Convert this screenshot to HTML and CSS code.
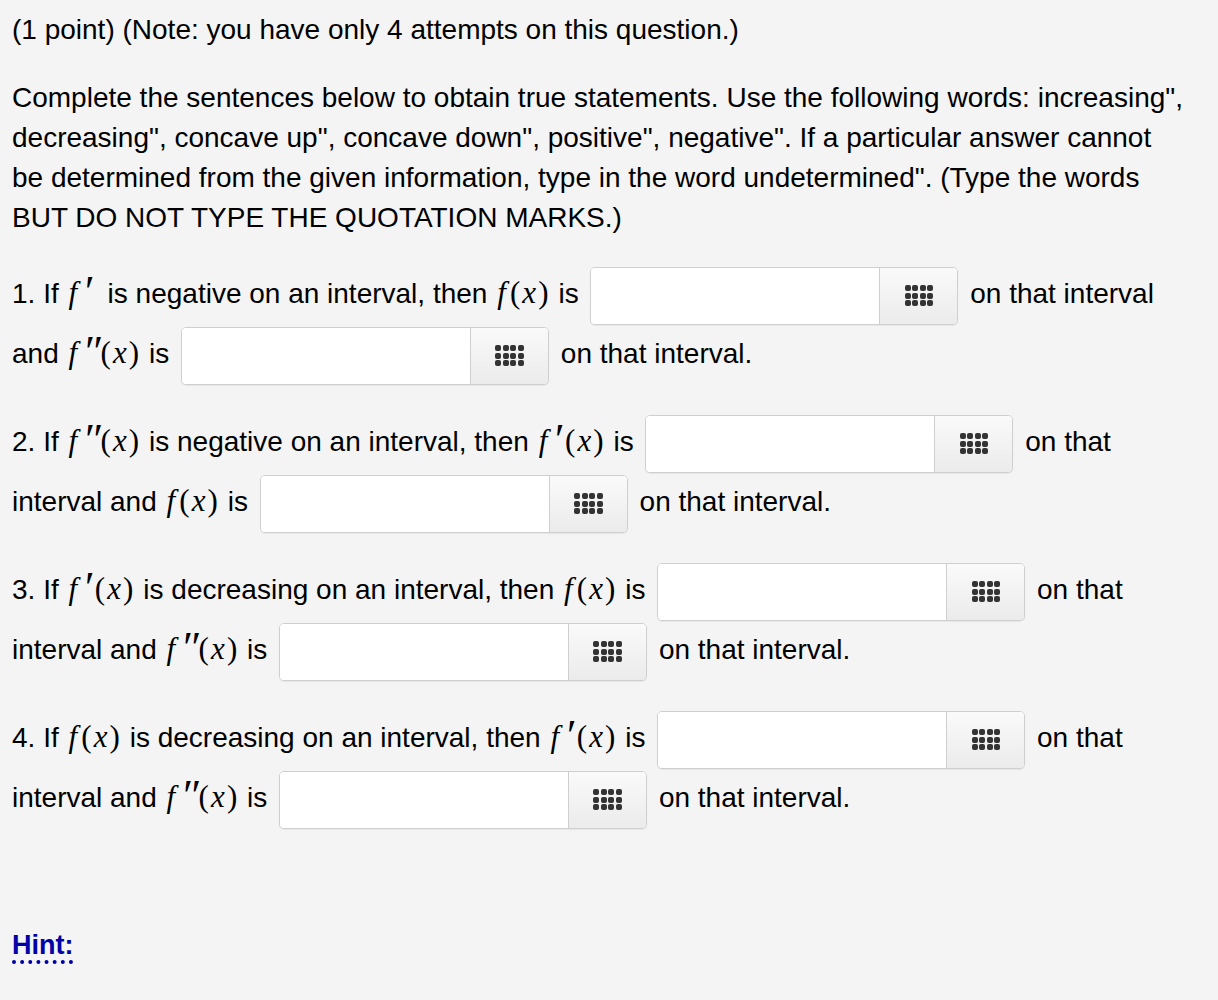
FILE: index.html
```html
<!DOCTYPE html>
<html>
<head>
<meta charset="utf-8">
<link rel="stylesheet" href="styles.css">
</head>
<body>
<div class="page">
<p class="note">(1 point) (Note: you have only 4 attempts on this question.)</p>
<p class="intro">Complete the sentences below to obtain true statements. Use the following words: increasing", decreasing", concave up", concave down", positive", negative". If a particular answer cannot be determined from the given information, type in the word undetermined". (Type the words BUT DO NOT TYPE THE QUOTATION MARKS.)</p>

<p class="item">1. If <span class="m solo"><i class="f">f</i><span class="pr">′</span></span> is negative on an interval, then <span class="m"><i class="f">f</i>(<i>x</i>)</span> is <span class="ans"><span class="field"></span><span class="btn"><span class="grid"><b></b><b></b><b></b><b></b><b></b><b></b><b></b><b></b><b></b><b></b><b></b><b></b></span></span></span> on that interval and <span class="m"><i class="f">f</i><span class="pr pr2">″</span>(<i>x</i>)</span> is <span class="ans"><span class="field"></span><span class="btn"><span class="grid"><b></b><b></b><b></b><b></b><b></b><b></b><b></b><b></b><b></b><b></b><b></b><b></b></span></span></span> on that interval.</p>

<p class="item">2. If <span class="m"><i class="f">f</i><span class="pr pr2">″</span>(<i>x</i>)</span> is negative on an interval, then <span class="m"><i class="f">f</i><span class="pr">′</span>(<i>x</i>)</span> is <span class="ans"><span class="field"></span><span class="btn"><span class="grid"><b></b><b></b><b></b><b></b><b></b><b></b><b></b><b></b><b></b><b></b><b></b><b></b></span></span></span> on that interval and <span class="m"><i class="f">f</i>(<i>x</i>)</span> is <span class="ans"><span class="field"></span><span class="btn"><span class="grid"><b></b><b></b><b></b><b></b><b></b><b></b><b></b><b></b><b></b><b></b><b></b><b></b></span></span></span> on that interval.</p>

<p class="item">3. If <span class="m"><i class="f">f</i><span class="pr">′</span>(<i>x</i>)</span> is decreasing on an interval, then <span class="m"><i class="f">f</i>(<i>x</i>)</span> is <span class="ans"><span class="field"></span><span class="btn"><span class="grid"><b></b><b></b><b></b><b></b><b></b><b></b><b></b><b></b><b></b><b></b><b></b><b></b></span></span></span> on that interval and <span class="m"><i class="f">f</i><span class="pr pr2">″</span>(<i>x</i>)</span> is <span class="ans"><span class="field"></span><span class="btn"><span class="grid"><b></b><b></b><b></b><b></b><b></b><b></b><b></b><b></b><b></b><b></b><b></b><b></b></span></span></span> on that interval.</p>

<p class="item">4. If <span class="m"><i class="f">f</i>(<i>x</i>)</span> is decreasing on an interval, then <span class="m"><i class="f">f</i><span class="pr">′</span>(<i>x</i>)</span> is <span class="ans"><span class="field"></span><span class="btn"><span class="grid"><b></b><b></b><b></b><b></b><b></b><b></b><b></b><b></b><b></b><b></b><b></b><b></b></span></span></span> on that interval and <span class="m"><i class="f">f</i><span class="pr pr2">″</span>(<i>x</i>)</span> is <span class="ans"><span class="field"></span><span class="btn"><span class="grid"><b></b><b></b><b></b><b></b><b></b><b></b><b></b><b></b><b></b><b></b><b></b><b></b></span></span></span> on that interval.</p>

<p class="hint"><a class="hintlink">Hint:</a></p>
</div>
</body>
</html>
```

FILE: styles.css
```css
html, body {
  margin: 0;
  padding: 0;
  background: #f4f4f4;
}
.page {
  padding: 10px 12px 0 12px;
  width: 1175px;
  font-family: "Liberation Sans", Arial, sans-serif;
  font-size: 28px;
  color: #000;
}
p {
  margin: 0;
  line-height: 40px;
}
.intro {
  margin-top: 28px;
}
.item {
  line-height: 60px;
  margin-top: 26px;
}
.item + .item {
  margin-top: 28px;
}
.m {
  font-family: "Liberation Serif", "Times New Roman", serif;
  font-size: 31px;
  line-height: 1;
  letter-spacing: 2.1px;
  white-space: nowrap;
  margin-left: 2px;
}
.m i {
  font-style: italic;
}
.m.solo {
  margin-right: 5px;
}
.f {
  margin-right: 2px;
}
.pr {
  font-family: "Liberation Serif", serif;
  font-style: italic;
  font-size: 44px;
  line-height: 0;
  vertical-align: -3px;
  letter-spacing: 0;
  margin-left: 1px;
  margin-right: 3px;
}
.pr.pr2 {
  margin-right: 0;
}
.ans {
  display: inline-flex;
  vertical-align: middle;
  height: 58px;
  width: 368px;
  box-sizing: border-box;
  border: 1px solid #cfcfcf;
  border-radius: 5px;
  background: #fff;
  margin: -2px 4px;
  overflow: hidden;
  box-shadow: 0 1px 1px rgba(0,0,0,0.06);
}
.field {
  flex: 1;
  background: #fff;
}
.btn {
  width: 77px;
  border-left: 1px solid #cfcfcf;
  background: linear-gradient(#fafafa, #ebebeb);
  display: flex;
  align-items: center;
  justify-content: center;
}
.grid {
  display: grid;
  grid-template-columns: repeat(4, 6px);
  grid-auto-rows: 6px;
  gap: 1.5px;
}
.grid b {
  background: #333;
  border-radius: 2px;
}
.hint {
  margin-top: 97px;
}
.hintlink {
  color: #0000a8;
  font-weight: bold;
  font-size: 27px;
  text-decoration: none;
  border-bottom: 4px dotted #0000a8;
}
```
